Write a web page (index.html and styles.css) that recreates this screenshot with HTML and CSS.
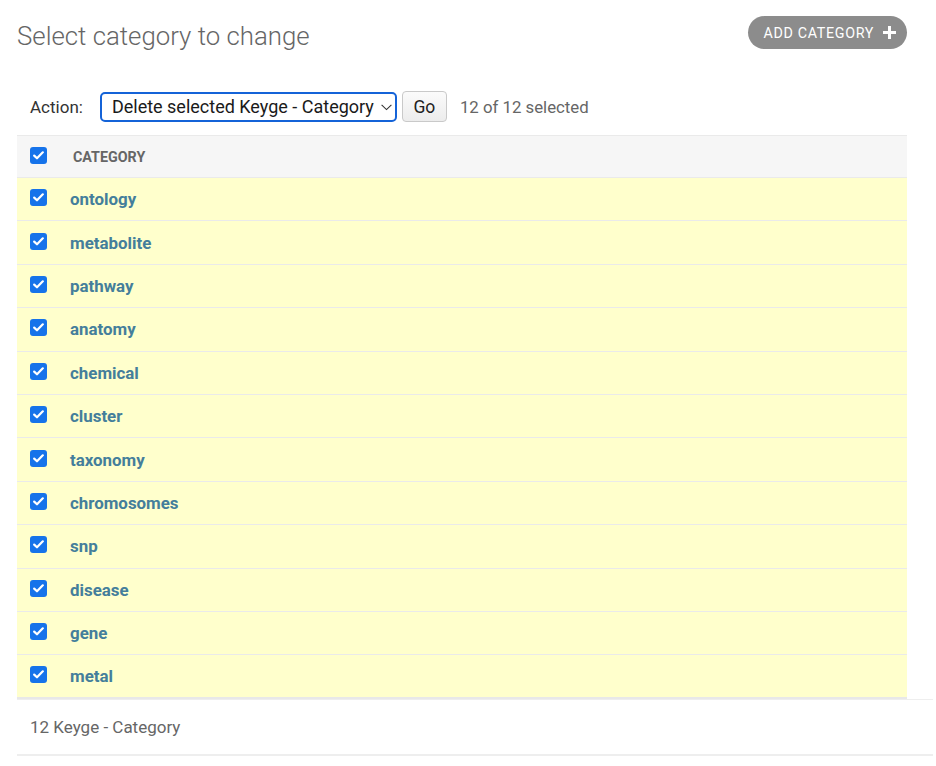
FILE: index.html
```html
<!DOCTYPE html>
<html lang="en">
<head>
<meta charset="utf-8">
<title>Select category to change</title>
<link rel="stylesheet" href="styles.css">
</head>
<body>
<div class="content">
  <div class="page-head">
    <h1 class="title">Select category to change</h1>
    <a class="add-btn" href="#">ADD CATEGORY
      <svg class="plus" width="13" height="13" viewBox="0 0 13 13"><path d="M5 0h3v5h5v3H8v5H5V8H0V5h5z" fill="#fff"/></svg>
    </a>
  </div>

  <div class="actions">
    <label class="action-label">Action:</label>
    <div class="select-wrap">
      <select class="action-select">
        <option>Delete selected Keyge - Category</option>
      </select>
      <svg class="chev" width="11" height="7" viewBox="0 0 11 7"><path d="M0.6 0.8L5.5 5.6L10.4 0.8" fill="none" stroke="#333" stroke-width="1.1"/></svg>
    </div>
    <button class="go-btn">Go</button>
    <span class="counter">12 of 12 selected</span>
  </div>

  <table class="results">
    <thead>
      <tr>
        <th class="cb-col"><span class="cb"><svg width="11" height="9" viewBox="0 0 11 9"><path d="M1.2 4.6L4 7.3L9.8 1.3" fill="none" stroke="#fff" stroke-width="2.2" stroke-linecap="round" stroke-linejoin="round"/></svg></span></th>
        <th class="name-col"><span class="th-text">CATEGORY</span></th>
      </tr>
    </thead>
    <tbody>
      <tr><td class="cb-col"><span class="cb"><svg width="11" height="9" viewBox="0 0 11 9"><path d="M1.2 4.6L4 7.3L9.8 1.3" fill="none" stroke="#fff" stroke-width="2.2" stroke-linecap="round" stroke-linejoin="round"/></svg></span></td><td class="name-col"><a href="#">ontology</a></td></tr>
      <tr><td class="cb-col"><span class="cb"><svg width="11" height="9" viewBox="0 0 11 9"><path d="M1.2 4.6L4 7.3L9.8 1.3" fill="none" stroke="#fff" stroke-width="2.2" stroke-linecap="round" stroke-linejoin="round"/></svg></span></td><td class="name-col"><a href="#">metabolite</a></td></tr>
      <tr><td class="cb-col"><span class="cb"><svg width="11" height="9" viewBox="0 0 11 9"><path d="M1.2 4.6L4 7.3L9.8 1.3" fill="none" stroke="#fff" stroke-width="2.2" stroke-linecap="round" stroke-linejoin="round"/></svg></span></td><td class="name-col"><a href="#">pathway</a></td></tr>
      <tr><td class="cb-col"><span class="cb"><svg width="11" height="9" viewBox="0 0 11 9"><path d="M1.2 4.6L4 7.3L9.8 1.3" fill="none" stroke="#fff" stroke-width="2.2" stroke-linecap="round" stroke-linejoin="round"/></svg></span></td><td class="name-col"><a href="#">anatomy</a></td></tr>
      <tr><td class="cb-col"><span class="cb"><svg width="11" height="9" viewBox="0 0 11 9"><path d="M1.2 4.6L4 7.3L9.8 1.3" fill="none" stroke="#fff" stroke-width="2.2" stroke-linecap="round" stroke-linejoin="round"/></svg></span></td><td class="name-col"><a href="#">chemical</a></td></tr>
      <tr><td class="cb-col"><span class="cb"><svg width="11" height="9" viewBox="0 0 11 9"><path d="M1.2 4.6L4 7.3L9.8 1.3" fill="none" stroke="#fff" stroke-width="2.2" stroke-linecap="round" stroke-linejoin="round"/></svg></span></td><td class="name-col"><a href="#">cluster</a></td></tr>
      <tr><td class="cb-col"><span class="cb"><svg width="11" height="9" viewBox="0 0 11 9"><path d="M1.2 4.6L4 7.3L9.8 1.3" fill="none" stroke="#fff" stroke-width="2.2" stroke-linecap="round" stroke-linejoin="round"/></svg></span></td><td class="name-col"><a href="#">taxonomy</a></td></tr>
      <tr><td class="cb-col"><span class="cb"><svg width="11" height="9" viewBox="0 0 11 9"><path d="M1.2 4.6L4 7.3L9.8 1.3" fill="none" stroke="#fff" stroke-width="2.2" stroke-linecap="round" stroke-linejoin="round"/></svg></span></td><td class="name-col"><a href="#">chromosomes</a></td></tr>
      <tr><td class="cb-col"><span class="cb"><svg width="11" height="9" viewBox="0 0 11 9"><path d="M1.2 4.6L4 7.3L9.8 1.3" fill="none" stroke="#fff" stroke-width="2.2" stroke-linecap="round" stroke-linejoin="round"/></svg></span></td><td class="name-col"><a href="#">snp</a></td></tr>
      <tr><td class="cb-col"><span class="cb"><svg width="11" height="9" viewBox="0 0 11 9"><path d="M1.2 4.6L4 7.3L9.8 1.3" fill="none" stroke="#fff" stroke-width="2.2" stroke-linecap="round" stroke-linejoin="round"/></svg></span></td><td class="name-col"><a href="#">disease</a></td></tr>
      <tr><td class="cb-col"><span class="cb"><svg width="11" height="9" viewBox="0 0 11 9"><path d="M1.2 4.6L4 7.3L9.8 1.3" fill="none" stroke="#fff" stroke-width="2.2" stroke-linecap="round" stroke-linejoin="round"/></svg></span></td><td class="name-col"><a href="#">gene</a></td></tr>
      <tr><td class="cb-col"><span class="cb"><svg width="11" height="9" viewBox="0 0 11 9"><path d="M1.2 4.6L4 7.3L9.8 1.3" fill="none" stroke="#fff" stroke-width="2.2" stroke-linecap="round" stroke-linejoin="round"/></svg></span></td><td class="name-col"><a href="#">metal</a></td></tr>
    </tbody>
  </table>

  <p class="paginator">12 Keyge - Category</p>
</div>
</body>
</html>
```

FILE: styles.css
```css
* { box-sizing: border-box; }

html, body {
  margin: 0;
  padding: 0;
  background: #fff;
}

body {
  font-family: Roboto, "Liberation Sans", Arial, sans-serif;
  color: #333;
}

.content {
  padding-left: 17px;
  width: 933px;
}

.page-head {
  width: 890px;
  display: flex;
  justify-content: space-between;
  align-items: flex-start;
  padding-top: 16px;
}

.title {
  margin: 5px 0 0 0;
  font-size: 25.8px;
  font-weight: 300;
  line-height: normal;
  color: #666;
}

.add-btn {
  display: flex;
  align-items: center;
  height: 33px;
  padding: 0 11px 0 16px;
  border-radius: 17px;
  background: #8c8c8c;
  color: #fff;
  text-decoration: none;
  font-size: 14.3px;
  letter-spacing: 0.65px;
  font-weight: 400;
}

.add-btn .plus {
  margin-left: 9px;
}

.actions {
  display: flex;
  align-items: center;
  height: 31px;
  margin-top: 40px;
  padding-left: 13px;
  font-size: 17px;
}

.action-label {
  color: #333;
  margin-right: 17px;
}

.select-wrap {
  position: relative;
  height: 30px;
}

.action-select {
  appearance: none;
  -webkit-appearance: none;
  width: 297px;
  height: 30px;
  border: 2px solid #1463d8;
  border-radius: 5px;
  background: #fff;
  padding: 0 0 0 10px;
  font-family: Roboto, "Liberation Sans", Arial, sans-serif;
  font-size: 18px;
  color: #1a1a1a;
  outline: none;
}

.chev {
  position: absolute;
  right: 5px;
  top: 12px;
  pointer-events: none;
}

.go-btn {
  margin-left: 5px;
  width: 45px;
  height: 31px;
  border: 1px solid #c9c9c9;
  border-radius: 4px;
  background: linear-gradient(#fbfbfb, #ececec);
  font-family: Roboto, "Liberation Sans", Arial, sans-serif;
  font-size: 17.5px;
  color: #222;
  padding: 0;
}

.counter {
  margin-left: 13px;
  font-size: 16.8px;
  color: #666;
}

.results {
  margin-top: 13px;
  width: 890px;
  border-collapse: separate;
  border-spacing: 0;
}

.results th {
  height: 43px;
  background: #f6f6f6;
  border-top: 1px solid #eaeaea;
  border-bottom: 1px solid #eaeaea;
  text-align: left;
  padding: 0;
  vertical-align: middle;
}

.th-text {
  display: block;
  padding-left: 13px;
  font-size: 14.3px;
  font-weight: 700;
  color: #666;
}

.results td {
  height: 43.4px;
  background: #ffffcc;
  border-bottom: 1px solid #eaeaea;
  padding: 0;
  vertical-align: middle;
}

.results tbody tr:last-child td {
  border-bottom: 2px solid #e8e8e8;
}

.cb-col {
  width: 43px;
  padding-left: 13px !important;
}

.name-col {
  padding-left: 10px !important;
}

.results thead .name-col {
  padding-left: 0 !important;
}

.cb {
  display: flex;
  align-items: center;
  justify-content: center;
  width: 17px;
  height: 17px;
  border-radius: 3px;
  background: #1673ea;
  margin-top: -3px;
}

.results a {
  color: #447e9b;
  font-weight: 700;
  font-size: 16.9px;
  text-decoration: none;
}

.paginator {
  margin: 0;
  width: 916px;
  padding: 13px 13px;
  line-height: 28.6px;
  font-size: 17px;
  color: #666;
  border-top: 1px solid #eee;
  border-bottom: 2px solid #eee;
  background: #fff;
}
```
